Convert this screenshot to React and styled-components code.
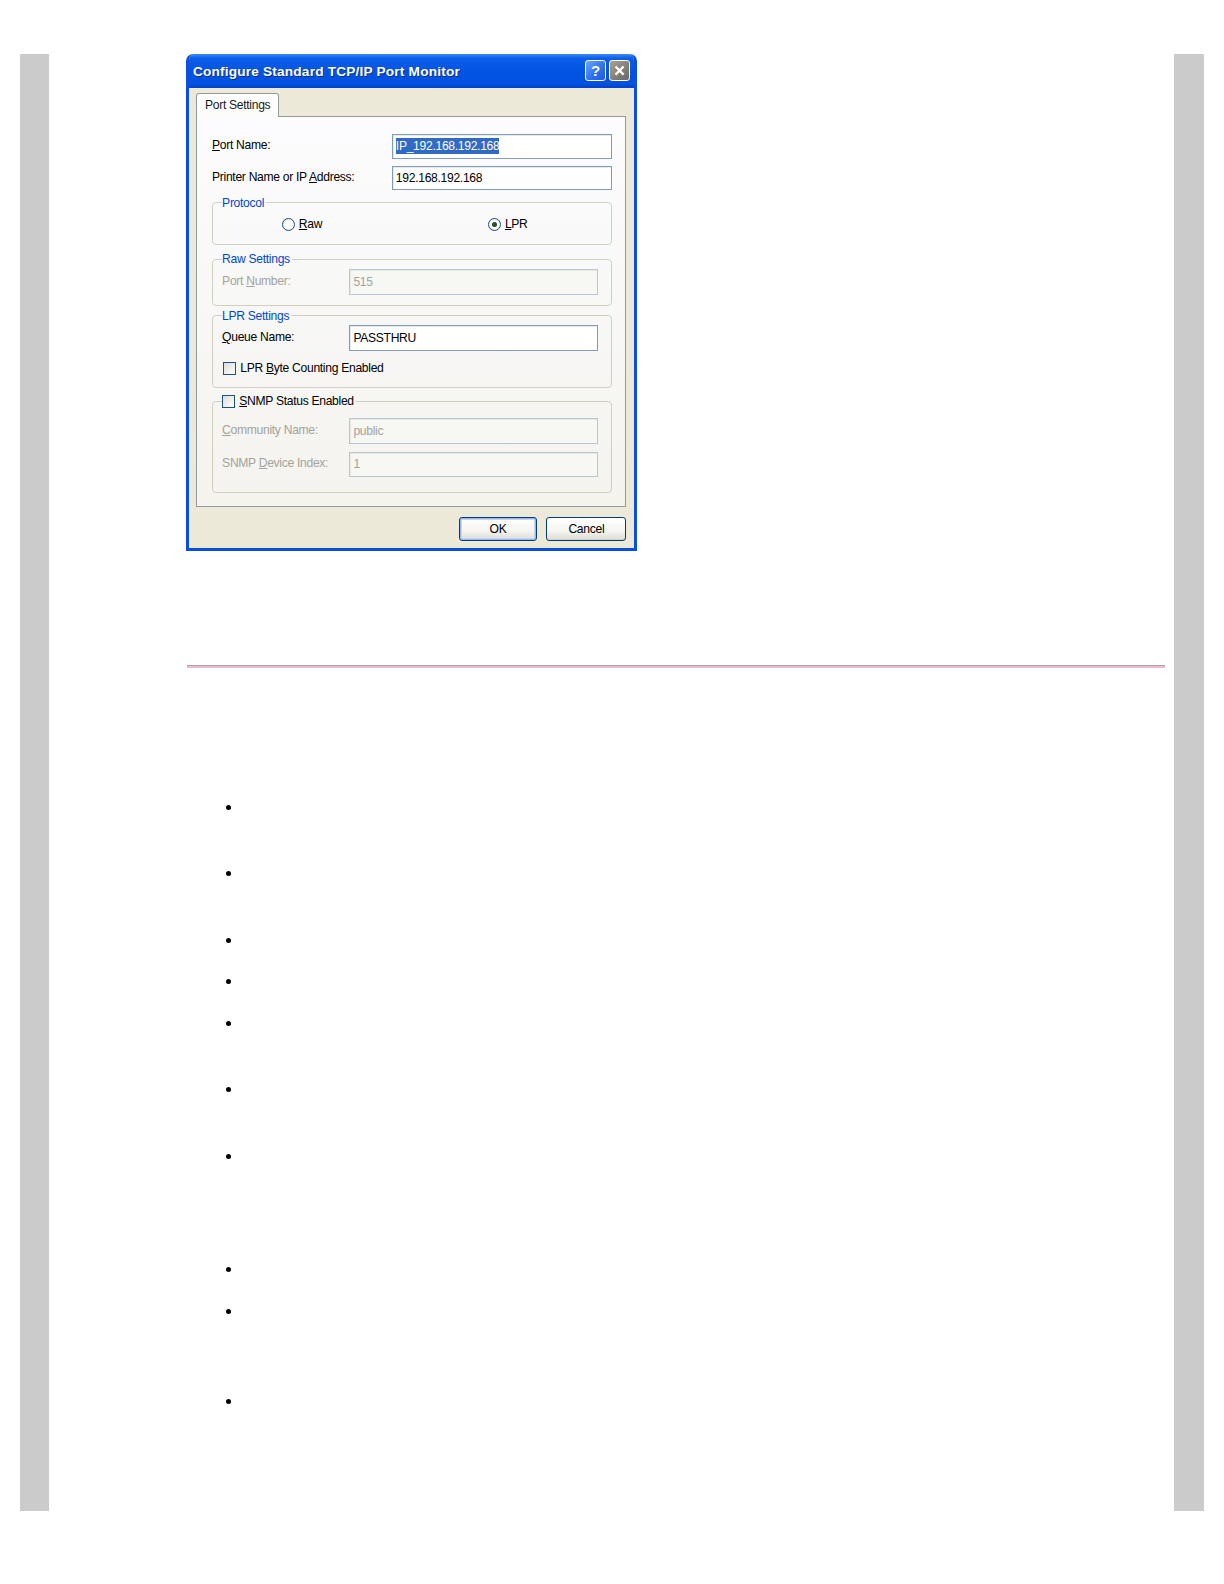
import React from "react";
import styled, { createGlobalStyle } from "styled-components";

const Global = createGlobalStyle`
  html, body { margin: 0; padding: 0; background: #ffffff; overflow: hidden; }
  body { font-family: "Liberation Sans", Arial, sans-serif; }
`;

const Page = styled.div`
  zoom: 1.0101;
  display: flex;
  align-items: stretch;
  padding-top: 53px;
  height: 1443px;
`;

const SideBar = styled.div`
  flex: none;
  width: ${(p) => p.$w}px;
  margin-left: ${(p) => p.$ml || 0}px;
  margin-right: ${(p) => p.$mr || 0}px;
  background: #cbcbcb;
`;

const Main = styled.main`
  flex: 1;
  min-width: 0;
  padding: 0 9px 0 135px;
  display: flow-root;
`;

/* ---------- XP window ---------- */
const Window = styled.div`
  width: 447px;
  box-sizing: border-box;
  border: 3px solid #0a4fe0;
  border-top: none;
  border-radius: 7px 7px 0 0;
  background: #ece9d8;
  font-family: "Liberation Sans", Arial, sans-serif;
  font-size: 12px;
  letter-spacing: -0.3px;
  color: #000;
  overflow: hidden;
`;

const TitleBar = styled.div`
  height: 34px;
  margin: 0 -3px;
  padding: 0 7px 0 7px;
  display: flex;
  align-items: center;
  justify-content: space-between;
  background: linear-gradient(
    #3c8cf8 0%,
    #0d5ee8 12%,
    #0454e4 50%,
    #0251e0 88%,
    #0342c8 100%
  );
  border-radius: 7px 7px 0 0;
`;

const Title = styled.span`
  color: #fff;
  font-weight: bold;
  font-size: 13.5px;
  letter-spacing: 0.2px;
  text-shadow: 1px 1px 0 #0a2c8a;
  padding-top: 1px;
`;

const TitleButtons = styled.div`
  display: flex;
  gap: 3px;
`;

const CapButton = styled.div`
  width: 21px;
  height: 21px;
  box-sizing: border-box;
  border: 1px solid #fff;
  border-radius: 3px;
  display: flex;
  align-items: center;
  justify-content: center;
  color: #fff;
  font-weight: bold;
  font-size: 15px;
  background: ${(p) =>
    p.$close
      ? "linear-gradient(135deg, #a8a39a 0%, #837e74 60%, #6c675f 100%)"
      : "linear-gradient(135deg, #6ea4fb 0%, #2f72ee 55%, #1a5ae0 100%)"};
`;

const Body = styled.div`
  padding: 5px 8px 7px 7px;
`;

const TabStrip = styled.div`
  display: flex;
  position: relative;
  z-index: 1;
  margin-bottom: -1px;
`;

const Tab = styled.div`
  height: 24px;
  box-sizing: border-box;
  padding: 4px 8px 0 8px;
  border: 1px solid #919b9c;
  border-bottom: none;
  border-radius: 3px 3px 0 0;
  background: linear-gradient(#ffffff, #fbfbf9);
  color: #1a1a1a;
`;

const Panel = styled.div`
  border: 1px solid #919b9c;
  background: linear-gradient(#fcfcfe, #f4f3ee);
  padding: 17px 13px 13px 15px;
`;

const FormRow = styled.div`
  display: grid;
  grid-template-columns: ${(p) => p.$label}px 1fr;
  align-items: center;
  margin-top: ${(p) => p.$mt || 0}px;
`;

const Label = styled.span`
  color: ${(p) => (p.$disabled ? "#a3a39a" : "#000")};
  padding-bottom: ${(p) => (p.$raise ? 2 : 0)}px;
  u { text-decoration: underline; }
`;

const Input = styled.div`
  height: ${(p) => p.$h || 24}px;
  box-sizing: border-box;
  border: 1px solid ${(p) => (p.$disabled ? "#b8c6d6" : "#7f9db9")};
  background: ${(p) => (p.$disabled ? "#f7f7f4" : "#ffffff")};
  color: ${(p) => (p.$disabled ? "#a3a39a" : "#000")};
  padding: 0 3px;
  display: flex;
  align-items: center;
  box-shadow: inset 1px 1px 0 ${(p) => (p.$disabled ? "#e8e8e0" : "#e4eaf2")};
`;

const Selected = styled.span`
  background: #316ac5;
  color: #fff;
  padding: 1px 0;
`;

const Group = styled.fieldset`
  margin: ${(p) => p.$mt}px 0 0 0;
  padding: ${(p) => p.$pt}px 13px ${(p) => p.$pb}px 9px;
  border: 1px solid #d0d0bf;
  border-radius: 4px;
  min-width: 0;
`;

const Legend = styled.legend`
  padding: 0 2px 0 0;
  margin-left: 0;
  color: ${(p) => (p.$plain ? "#000" : "#0046d5")};
  line-height: 14px;
  display: flex;
  align-items: center;
  gap: 4px;
`;

const RadioRow = styled.div`
  display: grid;
  grid-template-columns: 204px 1fr;
  padding-left: 59px;
`;

const Choice = styled.label`
  display: inline-flex;
  align-items: center;
  gap: 4px;
  line-height: 14px;
`;

const Radio = styled.span`
  width: 13px;
  height: 13px;
  box-sizing: border-box;
  border-radius: 50%;
  border: 1px solid #1c5180;
  background: radial-gradient(circle, #ffffff 40%, #dcdcd6 100%);
  display: inline-flex;
  align-items: center;
  justify-content: center;
  &::after {
    content: "";
    width: 5px;
    height: 5px;
    border-radius: 50%;
    background: ${(p) => (p.$on ? "radial-gradient(circle, #2a5a2a, #1a3a1a)" : "transparent")};
  }
`;

const Check = styled.span`
  width: 13px;
  height: 13px;
  box-sizing: border-box;
  border: 1px solid #1c5180;
  background: linear-gradient(135deg, #dcdcd7 0%, #ffffff 100%);
  display: inline-block;
`;

const CheckRow = styled.div`
  margin-top: ${(p) => p.$mt}px;
  line-height: 14px;
  padding-left: 1px;
`;

const ButtonRow = styled.div`
  display: flex;
  justify-content: flex-end;
  gap: 9px;
  padding-top: 10px;
`;

const Button = styled.div`
  width: ${(p) => p.$w}px;
  height: 23px;
  box-sizing: border-box;
  border: 1px solid #003c74;
  border-radius: 3px;
  background: linear-gradient(#ffffff 0%, #f4f4f0 60%, #dcdbd3 100%);
  display: flex;
  align-items: center;
  justify-content: center;
  box-shadow: ${(p) =>
    p.$default ? "inset 0 0 0 1px #98b8ea, inset 0 0 0 2px #c4d6f4" : "inset 0 -1px 0 #d6d0c5"};
`;

/* ---------- page content ---------- */
const Rule = styled.hr`
  margin: 113px 0 0 1px;
  height: 0;
  border: none;
  border-top: 1px solid #a9a3a6;
  border-bottom: 2px solid #ecbccc;
`;

const List = styled.ul`
  list-style: none;
  margin: 128px 0 0 0;
  padding: 0 0 0 40px;
`;

const Item = styled.li`
  height: ${(p) => p.$h}px;
  box-sizing: border-box;
  padding-top: 8px;
  &::before {
    content: "";
    display: block;
    width: 5px;
    height: 5px;
    border-radius: 50%;
    background: #000;
  }
`;

const gaps = [65, 66, 41, 42, 65, 66, 112, 42, 89, 21];

export default function App() {
  return (
    <>
      <Global />
      <Page>
        <SideBar $w={29} $ml={20} />
        <Main>
          <Window>
            <TitleBar>
              <Title>Configure Standard TCP/IP Port Monitor</Title>
              <TitleButtons>
                <CapButton>?</CapButton>
                <CapButton $close>
                  <svg width="11" height="11" viewBox="0 0 11 11">
                    <path d="M1.5 1.5 L9.5 9.5 M9.5 1.5 L1.5 9.5" stroke="#fff" strokeWidth="2.2" />
                  </svg>
                </CapButton>
              </TitleButtons>
            </TitleBar>
            <Body>
              <TabStrip>
                <Tab>Port Settings</Tab>
              </TabStrip>
              <Panel>
                <FormRow $label={178}>
                  <Label $raise><u>P</u>ort Name:</Label>
                  <Input><Selected>IP_192.168.192.168</Selected></Input>
                </FormRow>
                <FormRow $label={178} $mt={7}>
                  <Label $raise>Printer Name or IP <u>A</u>ddress:</Label>
                  <Input>192.168.192.168</Input>
                </FormRow>

                <Group $mt={6} $pt={7} $pb={13}>
                  <Legend>Protocol</Legend>
                  <RadioRow>
                    <Choice><Radio /><span><u>R</u>aw</span></Choice>
                    <Choice><Radio $on /><span><u>L</u>PR</span></Choice>
                  </RadioRow>
                </Group>

                <Group $mt={7} $pt={2} $pb={10}>
                  <Legend>Raw Settings</Legend>
                  <FormRow $label={126}>
                    <Label $disabled $raise>Port <u>N</u>umber:</Label>
                    <Input $disabled $h={26}>515</Input>
                  </FormRow>
                </Group>

                <Group $mt={3} $pt={2} $pb={9}>
                  <Legend>LPR Settings</Legend>
                  <FormRow $label={126}>
                    <Label $raise><u>Q</u>ueue Name:</Label>
                    <Input $h={26}>PASSTHRU</Input>
                  </FormRow>
                  <CheckRow $mt={10}>
                    <Choice><Check /><span>LPR <u>B</u>yte Counting Enabled</span></Choice>
                  </CheckRow>
                </Group>

                <Group $mt={6} $pt={9} $pb={15}>
                  <Legend $plain><Check /><span><u>S</u>NMP Status Enabled</span></Legend>
                  <FormRow $label={126}>
                    <Label $disabled $raise><u>C</u>ommunity Name:</Label>
                    <Input $disabled $h={26}>public</Input>
                  </FormRow>
                  <FormRow $label={126} $mt={8}>
                    <Label $disabled $raise>SNMP <u>D</u>evice Index:</Label>
                    <Input $disabled $h={25}>1</Input>
                  </FormRow>
                </Group>
              </Panel>
              <ButtonRow>
                <Button $w={78} $default>OK</Button>
                <Button $w={79}>Cancel</Button>
              </ButtonRow>
            </Body>
          </Window>

          <Rule />

          <List>
            {gaps.map((h, i) => (
              <Item key={i} $h={h} />
            ))}
          </List>
        </Main>
        <SideBar $w={30} $mr={19.8} />
      </Page>
    </>
  );
}
